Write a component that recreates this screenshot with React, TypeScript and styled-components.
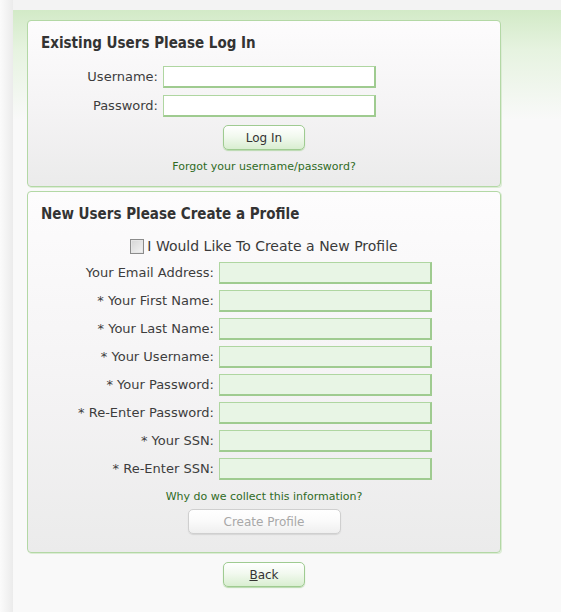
import React, { FC } from "react";
import styled, { createGlobalStyle } from "styled-components";

const GlobalStyle = createGlobalStyle`
  html, body {
    margin: 0;
    padding: 0;
    background: linear-gradient(to right, #fbfbfb 0, #ebebeb 13px, #f3f3f3 13px);
    font-family: "DejaVu Sans", Verdana, sans-serif;
    color: #333;
  }
`;

const Page = styled.div`
  padding: 10px 0 0 13px;
  min-height: 612px;
  box-sizing: border-box;
`;

const Wrapper = styled.div`
  min-height: 602px;
  padding: 10px 0 0 14px;
  box-sizing: border-box;
  background: linear-gradient(to bottom, #d2eac7 0, #e6f3e0 40px, #f9f9f9 110px, #f9f9f9 100%);
`;

const Column = styled.div`
  width: 474px;
  display: flex;
  flex-direction: column;
  gap: 4px;
`;

const Panel = styled.div<{ $height: number }>`
  height: ${(p) => p.$height}px;
  border: 1px solid #b3d8a5;
  border-radius: 4px;
  background: linear-gradient(to bottom, #fdfcfd 0, #f5f4f5 50%, #ebebeb 100%);
  box-shadow: 1px 1px 0 #dcecd5;
  box-sizing: border-box;
`;

const Title = styled.h2`
  margin: 0;
  padding: 14px 0 0 13px;
  font-family: "DejaVu Sans Condensed", "DejaVu Sans", sans-serif;
  font-size: 15px;
  line-height: 17px;
  font-weight: bold;
  color: #333;
`;

const Form = styled.div<{ $labelWidth: number; $top: number; $gap: number }>`
  display: grid;
  grid-template-columns: ${(p) => p.$labelWidth}px 213px;
  column-gap: 5px;
  row-gap: ${(p) => p.$gap}px;
  margin-top: ${(p) => p.$top}px;
`;

const Label = styled.label`
  text-align: right;
  font-size: 13px;
  line-height: 22px;
  color: #3d3d3d;
  white-space: nowrap;
`;

const Field = styled.input<{ $tint?: boolean }>`
  width: 213px;
  height: 22px;
  box-sizing: border-box;
  border-style: solid;
  border-width: 1px 2px 2px 1px;
  border-color: #afd6a1 #9fcb90 #9fcb90 #afd6a1;
  background: ${(p) => (p.$tint ? "#e8f5e5" : "#ffffff")};
  margin: 0;
  padding: 0 3px;
  font: 13px "DejaVu Sans", sans-serif;
  outline: none;
`;

const Center = styled.div<{ $top: number }>`
  display: flex;
  justify-content: center;
  margin-top: ${(p) => p.$top}px;
`;

const Button = styled.button<{ $width: number; $disabled?: boolean }>`
  width: ${(p) => p.$width}px;
  height: 25px;
  border-radius: 5px;
  border: 1px solid ${(p) => (p.$disabled ? "#cfcfcf" : "#9fcb91")};
  background: ${(p) =>
    p.$disabled
      ? "linear-gradient(to bottom, #ffffff 0, #fafafa 50%, #efefef 100%)"
      : "linear-gradient(to bottom, #ffffff 0, #f2f9ef 45%, #d9eed1 100%)"};
  box-shadow: 0 1px 1px ${(p) => (p.$disabled ? "#d6d6d6" : "#b9d9ae")};
  color: ${(p) => (p.$disabled ? "#a8a8a8" : "#333")};
  font: 12px "DejaVu Sans", sans-serif;
  padding: 0;
  cursor: pointer;
`;

const LinkText = styled.a`
  font: 11px "DejaVu Sans", sans-serif;
  color: #2f6b1f;
  text-decoration: none;
  line-height: 13px;
`;

const CheckRow = styled.label`
  display: flex;
  align-items: center;
  justify-content: center;
  gap: 3px;
  font-size: 14px;
  line-height: 18px;
  color: #3a3a3a;
  margin-top: 14px;
`;

const Box = styled.span`
  width: 12px;
  height: 13px;
  border: 1px solid #8c8c8c;
  background: linear-gradient(135deg, #d6d6d6 0, #f4f4f4 100%);
  box-shadow: inset 0 0 0 1px #e6e6e6;
`;

const Under = styled.span`
  text-decoration: underline;
`;

const profileFields = [
  "Your Email Address:",
  "* Your First Name:",
  "* Your Last Name:",
  "* Your Username:",
  "* Your Password:",
  "* Re-Enter Password:",
  "* Your SSN:",
  "* Re-Enter SSN:",
];

const App: FC = () => {
  return (
    <Page>
      <GlobalStyle />
      <Wrapper>
        <Column>
          <Panel $height={167}>
            <Title>Existing Users Please Log In</Title>
            <Form $labelWidth={130} $top={14} $gap={7}>
              <Label>Username:</Label>
              <Field />
              <Label>Password:</Label>
              <Field type="password" />
            </Form>
            <Center $top={8}>
              <Button $width={82}>Log In</Button>
            </Center>
            <Center $top={10}>
              <LinkText href="#">Forgot your username/password?</LinkText>
            </Center>
          </Panel>
          <Panel $height={362}>
            <Title>New Users Please Create a Profile</Title>
            <CheckRow>
              <Box />I Would Like To Create a New Profile
            </CheckRow>
            <Form $labelWidth={186} $top={7} $gap={6}>
              {profileFields.map((f) => (
                <React.Fragment key={f}>
                  <Label>{f}</Label>
                  <Field $tint />
                </React.Fragment>
              ))}
            </Form>
            <Center $top={10}>
              <LinkText href="#">Why do we collect this information?</LinkText>
            </Center>
            <Center $top={6}>
              <Button $width={153} $disabled>
                Create Profile
              </Button>
            </Center>
          </Panel>
          <Center $top={5}>
            <Button $width={82}>
              <Under>B</Under>ack
            </Button>
          </Center>
        </Column>
      </Wrapper>
    </Page>
  );
};

export default App;
